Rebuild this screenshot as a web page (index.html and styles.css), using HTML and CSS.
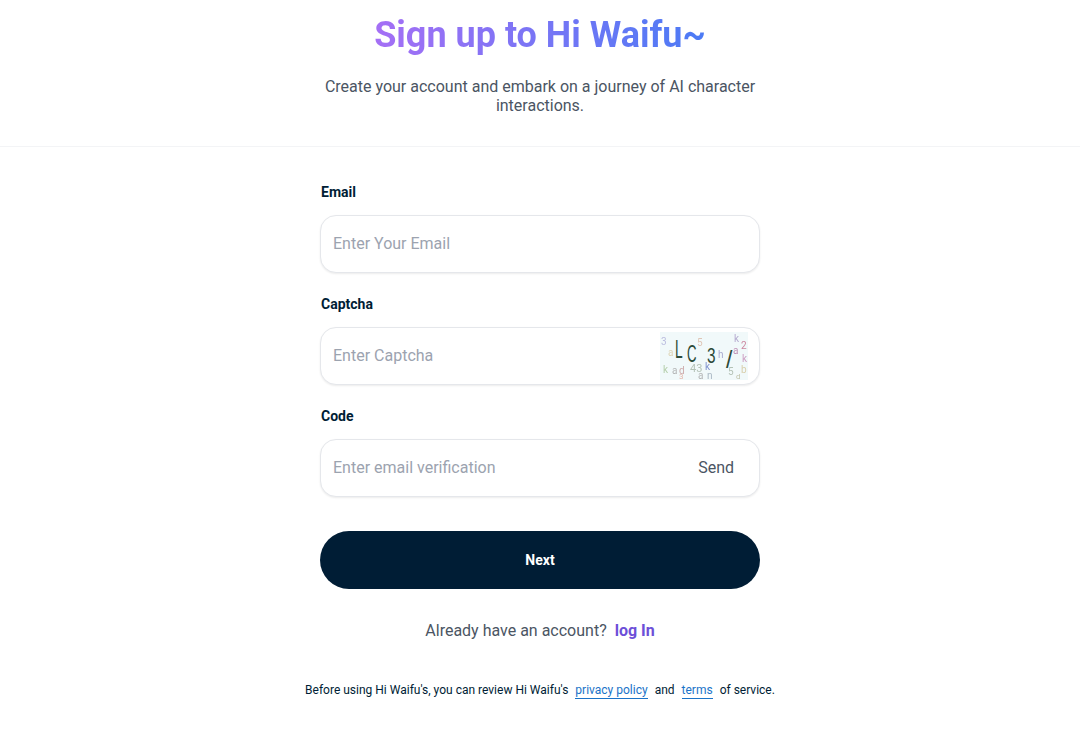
FILE: index.html
```html
<!DOCTYPE html>
<html lang="en">
<head>
  <meta charset="UTF-8" />
  <title>Sign up to Hi Waifu</title>
  <link rel="stylesheet" href="styles.css">
</head>
<body>
  <div class="header">
    <h1 class="title">Sign up to Hi Waifu~</h1>
    <p class="subtitle">Create your account and embark on a journey of AI character interactions.</p>
  </div>
  <form class="container">
    <div class="field">
      <label for="email">Email</label>
      <div class="input-box">
        <input type="text" id="email" placeholder="Enter Your Email" />
      </div>
    </div>
    <div class="field">
      <label for="captcha">Captcha</label>
      <div class="input-box">
        <input type="text" id="captcha" placeholder="Enter Captcha" />
        <svg class="captcha-img" width="88" height="48" viewBox="0 0 88 48">
          <rect width="88" height="48" fill="#f1f9fa" />
          <g font-family="Roboto, sans-serif" font-size="10" opacity="0.75">
            <text x="1" y="13" fill="#a9a9d6">3</text>
            <text x="8" y="24" fill="#d8c9a0">a</text>
            <text x="37" y="14" fill="#d8b4a0">5</text>
            <text x="74" y="10" fill="#a090c0">k</text>
            <text x="81" y="17" fill="#c06080">2</text>
            <text x="73" y="22" fill="#b070a0">a</text>
            <text x="58" y="26" fill="#9090c0">h</text>
            <text x="82" y="30" fill="#c080b0">k</text>
            <text x="3" y="41" fill="#a0c090">k</text>
            <text x="12" y="42" fill="#a0a0a0">a</text>
            <text x="19" y="42" fill="#c09090">d</text>
            <text x="30" y="40" fill="#a0b0a0" font-size="11">43</text>
            <text x="19" y="47" font-size="8" fill="#e0a090">3</text>
            <text x="38" y="47" fill="#a0a0a0">a</text>
            <text x="47" y="47" fill="#90a0b0">n</text>
            <text x="45" y="38" fill="#5a70c0">k</text>
            <text x="68" y="43" fill="#a0b0a0">5</text>
            <text x="81" y="41" fill="#d0c090">b</text>
            <text x="76" y="47" font-size="8" fill="#b0b090">d</text>
          </g>
          <g font-family="Liberation Sans, sans-serif" fill="#2c4a38">
            <text font-size="25" transform="translate(15 26) scale(0.55 1)">L</text>
            <text font-size="24" transform="translate(27 30) scale(0.55 1)">C</text>
            <text font-size="22" transform="translate(47 31) scale(0.7 1)">3</text>
            <text font-size="23" transform="translate(66 36)">/</text>
          </g>
        </svg>
      </div>
    </div>
    <div class="field">
      <label for="code">Code</label>
      <div class="input-box">
        <input type="text" id="code" placeholder="Enter email verification" />
        <button type="button" class="send-btn">Send</button>
      </div>
    </div>
    <button type="button" class="next-btn">Next</button>
    <div class="login-note">Already have an account? <a href="#" class="login-link">log In</a></div>
    <div class="terms-note">
      <span>Before using Hi Waifu's, you can review Hi Waifu's</span>
      <a href="#">privacy policy</a>
      <span>and</span>
      <a href="#">terms</a>
      <span>of service.</span>
    </div>
  </form>
</body>
</html>
```

FILE: styles.css
```css
body {
  font-family: Roboto, sans-serif;
  background: #fff;
  margin: 0;
  padding: 0;
}
.header {
  height: 131px;
  border-bottom: 1px solid #f3f4f6;
  display: flex;
  flex-direction: column;
  align-items: center;
  padding-top: 15px;
}
.title {
  margin: 0;
  font-size: 36px;
  line-height: 40px;
  font-weight: 700;
  background: linear-gradient(90deg, #a56ff5, #4b7bf5);
  -webkit-background-clip: text;
  background-clip: text;
  color: transparent;
}
.subtitle {
  margin: 22px 0 0;
  width: 440px;
  font-size: 16px;
  line-height: 19px;
  color: #4b5563;
  text-align: center;
}
.container {
  width: 440px;
  margin: 0 auto;
  padding-top: 35px;
  display: flex;
  flex-direction: column;
}
.field {
  margin-bottom: 21px;
}
label {
  display: block;
  padding-left: 1px;
  font-size: 14px;
  line-height: 20px;
  font-weight: 700;
  color: #001d35;
  margin-bottom: 13px;
}
.input-box {
  height: 58px;
  box-sizing: border-box;
  border: 1px solid #e5e7eb;
  border-radius: 16px;
  box-shadow: 0 1px 2px rgba(0, 0, 0, 0.08);
  display: flex;
  align-items: center;
  padding: 0 12px;
  background: #fff;
}
input {
  flex: 1;
  min-width: 0;
  border: none;
  outline: none;
  padding: 0 0 2px;
  font-family: inherit;
  font-size: 16px;
  color: #001d35;
}
input::placeholder {
  color: #9ca3af;
}
.captcha-img {
  flex: none;
  margin-right: -1px;
}
.send-btn {
  border: none;
  background: none;
  padding: 0 13px 2px 0;
  font-family: inherit;
  font-size: 16px;
  color: #4b5563;
}
.next-btn {
  margin-top: 13px;
  height: 58px;
  border: none;
  border-radius: 29px;
  background: #001d35;
  color: #fff;
  font-family: inherit;
  font-size: 14px;
  font-weight: 700;
}
.login-note {
  margin-top: 32px;
  text-align: center;
  font-size: 16px;
  line-height: 20px;
  color: #4b5563;
}
.login-link {
  margin-left: 4px;
  color: #6d4fd8;
  font-weight: 700;
  text-decoration: none;
}
.terms-note {
  margin: 41px -20px 0;
  display: flex;
  justify-content: center;
  gap: 7px;
  font-size: 12px;
  line-height: 16px;
  color: #001d35;
}
.terms-note a {
  color: #1a73c8;
  text-decoration: none;
  border-bottom: 1px solid #1a73c8;
}
```
